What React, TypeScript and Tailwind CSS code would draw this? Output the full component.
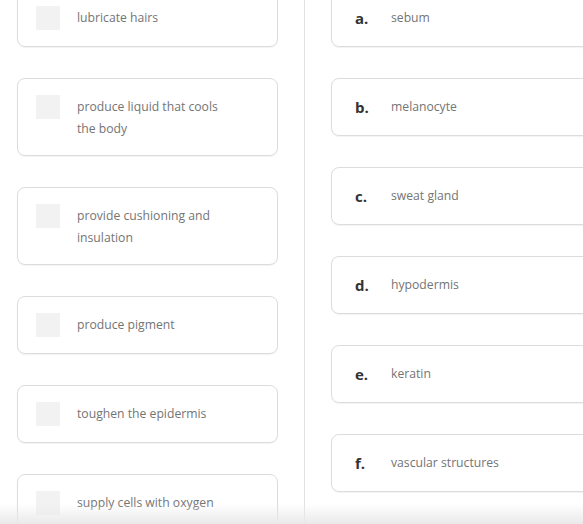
import React from 'react';

const prompts = [
  'lubricate hairs',
  'produce liquid that cools the body',
  'provide cushioning and insulation',
  'produce pigment',
  'toughen the epidermis',
  'supply cells with oxygen',
];

const answers = [
  { label: 'a.', text: 'sebum' },
  { label: 'b.', text: 'melanocyte' },
  { label: 'c.', text: 'sweat gland' },
  { label: 'd.', text: 'hypodermis' },
  { label: 'e.', text: 'keratin' },
  { label: 'f.', text: 'vascular structures' },
];

export default function App() {
  return (
    <div
      className="relative h-[524px] w-[583px] overflow-hidden bg-white text-[12.2px] text-[#747474]"
      style={{ fontFamily: '"Open Sans", "Liberation Sans", sans-serif' }}
    >
      <div className="flex">
        {/* Prompts */}
        <div className="w-[304px] shrink-0 pl-[17px]">
          <div className="-mt-[11px] flex flex-col gap-[31px]">
            {prompts.map((p) => (
              <div
                key={p}
                className="flex w-[261px] items-start gap-[17px] rounded-[8px] border border-[#dcdcdc] py-[16px] pl-[18px] shadow-[0_1px_1px_rgba(0,0,0,0.05)]"
              >
                <span className="h-[24px] w-[24px] shrink-0 bg-[#f2f2f2]" />
                <p className="-mb-px w-[150px] pt-px leading-[22px]">{p}</p>
              </div>
            ))}
          </div>
        </div>

        {/* Divider */}
        <div className="h-[524px] w-px shrink-0 bg-[#e2e2e2]" />

        {/* Answers */}
        <div className="min-w-0 flex-1 pl-[26px]">
          <div className="-mt-[11px] flex flex-col gap-[31px]">
            {answers.map((a) => (
              <div
                key={a.label}
                className="flex h-[58px] w-[300px] items-center rounded-[8px] border border-[#dcdcdc] pl-[23px] shadow-[0_1px_1px_rgba(0,0,0,0.05)]"
              >
                <span className="w-[36px] shrink-0 text-[15px] font-bold leading-[22px] text-[#333]">{a.label}</span>
                <span className="leading-[22px]">{a.text}</span>
              </div>
            ))}
          </div>
        </div>
      </div>

      {/* Bottom fade */}
      <div className="pointer-events-none absolute inset-x-0 bottom-0 h-[20px] bg-gradient-to-b from-white/0 to-[#e9e9e9]" />
    </div>
  );
}
